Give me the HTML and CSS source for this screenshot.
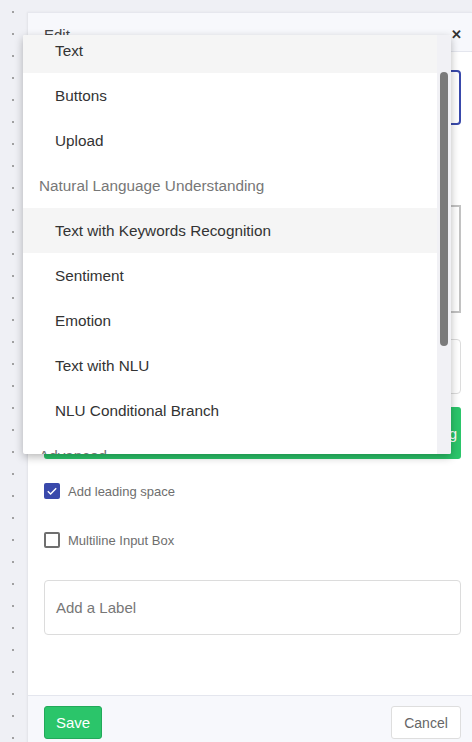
FILE: index.html
```html
<!DOCTYPE html>
<html>
<head>
<meta charset="utf-8">
<link rel="stylesheet" href="styles.css">
</head>
<body>
<div class="panel">
  <div class="panel-header">
    <span class="title">Edit</span>
    <span class="close">&#x2715;</span>
  </div>
  <div class="panel-body">
    <div class="select-box"></div>
    <div class="spacer"></div>
    <div class="textarea-box"></div>
    <div class="plain-box"></div>
    <div class="green-btn"><span>Add Formatting</span></div>
    <label class="check-row">
      <span class="check checked"><svg viewBox="0 0 16 16" width="16" height="16"><path d="M3.8 8.2 L6.6 11 L12.2 5.2" fill="none" stroke="#fff" stroke-width="1.4"/></svg></span>
      <span class="check-label">Add leading space</span>
    </label>
    <label class="check-row second">
      <span class="check"></span>
      <span class="check-label">Multiline Input Box</span>
    </label>
    <div class="label-input">Add a Label</div>
  </div>
  <div class="panel-footer">
    <button class="btn save">Save</button>
    <button class="btn cancel">Cancel</button>
  </div>
</div>

<div class="dropdown">
  <div class="list">
    <div class="item active">Text</div>
    <div class="item">Buttons</div>
    <div class="item">Upload</div>
    <div class="group">Natural Language Understanding</div>
    <div class="item hover">Text with Keywords Recognition</div>
    <div class="item">Sentiment</div>
    <div class="item">Emotion</div>
    <div class="item">Text with NLU</div>
    <div class="item">NLU Conditional Branch</div>
    <div class="group">Advanced</div>
  </div>
  <div class="track"><div class="thumb"></div></div>
</div>
</body>
</html>
```
FILE: styles.css
```css
html, body {
  margin: 0;
  padding: 0;
  height: 100%;
  overflow: hidden;
}
body {
  background-color: #eff0f5;
  background-image: radial-gradient(circle, #8a8a8a 0.6px, transparent 1.1px);
  background-size: 22px 22px;
  background-position: 2px 1px;
  background-repeat: repeat-y;
  font-family: "Liberation Sans", Arial, sans-serif;
  color: #333;
}
.panel {
  margin-left: 28px;
  margin-top: 12px;
  width: 444px;
  height: 760px;
  background: #fff;
  display: flex;
  flex-direction: column;
  box-shadow: -1px 0 2px rgba(0,0,0,0.06);
  border-top: 1px solid #e6e7ee;
  box-sizing: border-box;
}
.panel-header {
  height: 39px;
  box-sizing: border-box;
  background: #f7f8fc;
  border-bottom: 1px solid #e4e6ee;
  display: flex;
  align-items: center;
  justify-content: space-between;
  padding: 4px 10px 0 16px;
  flex: none;
}
.title {
  font-size: 15px;
  color: #444;
}
.close {
  font-size: 13px;
  font-weight: bold;
  color: #333;
}
.panel-body {
  padding: 18px 11px 0 16px;
  display: flex;
  flex-direction: column;
  flex: none;
  height: 643px;
  box-sizing: border-box;
}
.select-box {
  height: 55px;
  box-sizing: border-box;
  border: 2px solid #3949ab;
  border-radius: 4px;
}
.spacer {
  height: 80px;
}
.textarea-box {
  height: 108px;
  box-sizing: border-box;
  border: 2px solid #c2c2c2;
}
.plain-box {
  margin-top: 26px;
  height: 55px;
  box-sizing: border-box;
  border: 1px solid #dcdcdc;
  border-radius: 4px;
}
.green-btn {
  margin-top: 13px;
  height: 52px;
  background: #2bc56a;
  border-radius: 3px;
  display: flex;
  align-items: center;
  justify-content: flex-end;
  padding-right: 4px;
  color: #fff;
  font-size: 15px;
}
.check-row {
  margin-top: 24px;
  display: flex;
  align-items: center;
  gap: 8px;
  height: 16px;
}
.check-row.second {
  margin-top: 33px;
}
.check {
  width: 16px;
  height: 16px;
  box-sizing: border-box;
  border: 2px solid #6f6f6f;
  border-radius: 2px;
  flex: none;
  display: flex;
}
.check.checked {
  border: none;
  background: #3949ab;
}
.check-label {
  font-size: 13px;
  color: #6e6e6e;
}
.label-input {
  margin-top: 32px;
  height: 55px;
  box-sizing: border-box;
  border: 1px solid #dcdcdc;
  border-radius: 4px;
  padding-left: 11px;
  display: flex;
  align-items: center;
  font-size: 15px;
  color: #777;
}
.panel-footer {
  flex: none;
  height: 120px;
  box-sizing: border-box;
  background: #f7f8fc;
  border-top: 1px solid #e4e6ee;
  display: flex;
  justify-content: space-between;
  align-items: flex-start;
  padding: 10px 11px 0 16px;
}
.btn {
  height: 33px;
  box-sizing: border-box;
  font-family: "Liberation Sans", Arial, sans-serif;
  font-size: 14px;
  border-radius: 3px;
  cursor: pointer;
}
.save {
  width: 58px;
  font-size: 15px;
  background: #2bc56a;
  border: 1px solid #22a95a;
  color: #fff;
}
.cancel {
  width: 70px;
  background: #fff;
  border: 1px solid #dedede;
  color: #666;
}
.dropdown {
  position: absolute;
  left: 23px;
  top: 35px;
  width: 428px;
  height: 419px;
  background: #fff;
  box-shadow: 0 3px 8px rgba(0,0,0,0.28);
  overflow: hidden;
  display: flex;
  border-radius: 2px;
}
.list {
  width: 414px;
  margin-top: -7px;
  flex: none;
}
.item, .group {
  height: 45px;
  line-height: 45px;
  font-size: 15.3px;
  white-space: nowrap;
}
.item {
  padding-left: 32px;
  color: #333;
}
.group {
  padding-left: 16px;
  color: #777;
}
.item.active, .item.hover {
  background: #f5f5f5;
}
.track {
  width: 14px;
  flex: none;
  background: #f1f1f5;
  padding-top: 37px;
  box-sizing: border-box;
}
.thumb {
  margin-left: 3px;
  width: 8px;
  height: 274px;
  border-radius: 4px;
  background: #7b7b7b;
}
```
